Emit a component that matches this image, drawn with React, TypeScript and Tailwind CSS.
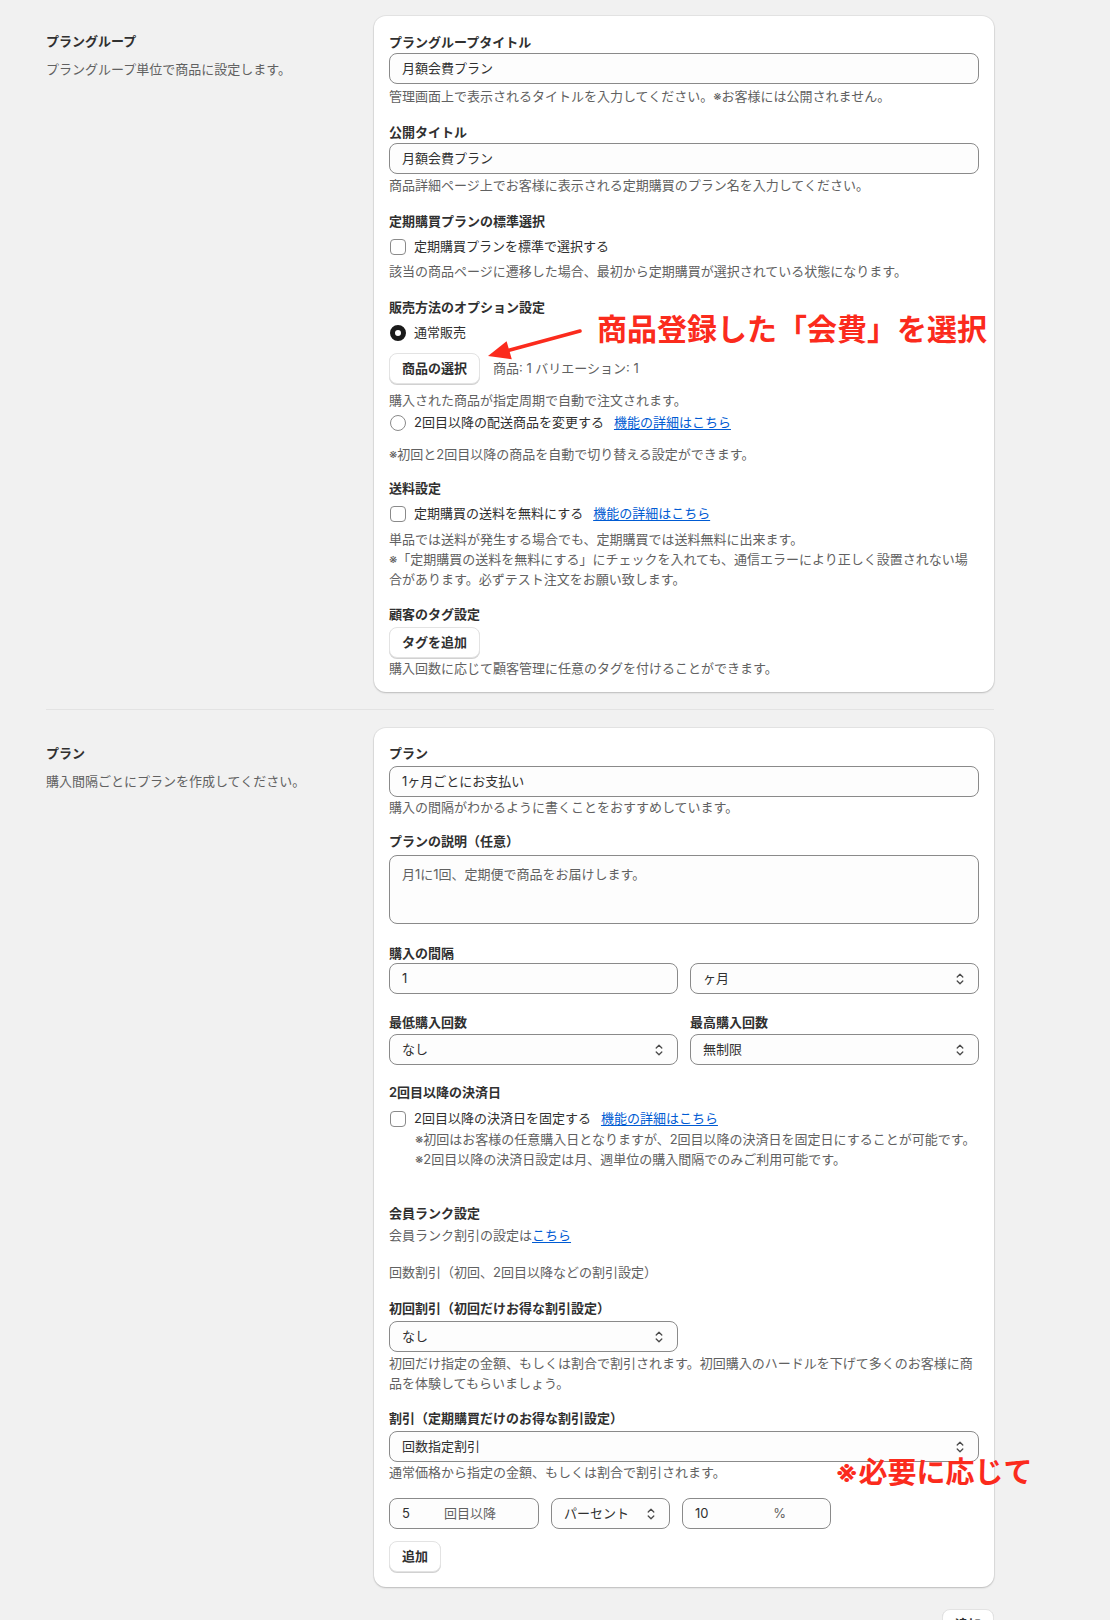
import type { ReactNode } from "react";

const Label = ({ children, className = "" }: { children: ReactNode; className?: string }) => (
  <div className={`text-[13px] leading-5 font-semibold text-[#303030] ${className}`}>{children}</div>
);

const Help = ({ children, className = "" }: { children: ReactNode; className?: string }) => (
  <div className={`text-[13px] leading-5 text-[#616161] ${className}`}>{children}</div>
);

const Field = ({ children, className = "" }: { children: ReactNode; className?: string }) => (
  <div
    className={`flex h-[31px] items-center rounded-lg border border-[#8a8a8a] bg-[#fdfdfd] px-3 text-[13px] text-[#303030] ${className}`}
  >
    {children}
  </div>
);

const Chevrons = () => (
  <svg viewBox="0 0 20 20" className="h-4 w-4 shrink-0" fill="none" stroke="#4a4a4a" strokeWidth="1.6" strokeLinecap="round" strokeLinejoin="round">
    <path d="M6.5 7.5 10 4l3.5 3.5" />
    <path d="M6.5 12.5 10 16l3.5-3.5" />
  </svg>
);

const Select = ({ value, className = "" }: { value: string; className?: string }) => (
  <Field className={`justify-between pr-[10px] ${className}`}>
    <span>{value}</span>
    <Chevrons />
  </Field>
);

const Button = ({ children, className = "" }: { children: ReactNode; className?: string }) => (
  <button
    className={`h-[31px] rounded-lg border border-[#e3e3e3] bg-white px-3 text-[13px] font-semibold text-[#303030] shadow-[0_1px_0_rgba(0,0,0,0.18)] ${className}`}
  >
    {children}
  </button>
);

const Checkbox = () => (
  <span className="ml-px h-4 w-4 shrink-0 rounded-[4px] border border-[#8a8a8a] bg-white" />
);

const Link = ({ children }: { children: ReactNode }) => (
  <a className="text-[#005bd3] underline underline-offset-2">{children}</a>
);

const CheckRow = ({ label, link, className = "" }: { label: string; link?: string; className?: string }) => (
  <div className={`flex h-5 items-center text-[13px] text-[#303030] ${className}`}>
    <Checkbox />
    <span className="ml-[8px]">{label}</span>
    {link && (
      <span className="ml-[10px]">
        <Link>{link}</Link>
      </span>
    )}
  </div>
);

const Card = ({ children }: { children: ReactNode }) => (
  <div className="w-[620px] rounded-xl bg-white px-[15px] shadow-[0_0_0_1px_rgba(0,0,0,0.05),0_1px_2px_rgba(0,0,0,0.18)]">
    {children}
  </div>
);

const SectionInfo = ({ title, desc }: { title: string; desc: string }) => (
  <div className="w-[328px] pt-[15px]">
    <div className="text-[13px] leading-5 font-semibold text-[#303030]">{title}</div>
    <div className="mt-2 text-[13px] leading-5 text-[#616161]">{desc}</div>
  </div>
);

export default function App() {
  return (
    <div className="relative min-h-[1620px] bg-[#f1f1f1] pt-4 font-['Inter','Noto_Sans_CJK_JP',sans-serif]">
      <div className="ml-[46px] w-[948px]">
        {/* plan group */}
        <div className="flex">
          <SectionInfo title="プラングループ" desc="プラングループ単位で商品に設定します。" />
          <Card>
            <div className="pt-4 pb-[14px]">
              <Label>プラングループタイトル</Label>
              <Field className="mt-px">月額会費プラン</Field>
              <Help className="mt-[2px]">管理画面上で表示されるタイトルを入力してください。※お客様には公開されません。</Help>

              <Label className="mt-4">公開タイトル</Label>
              <Field className="mt-px">月額会費プラン</Field>
              <Help className="mt-px">商品詳細ページ上でお客様に表示される定期購買のプラン名を入力してください。</Help>

              <Label className="mt-4">定期購買プランの標準選択</Label>
              <CheckRow className="mt-[6px]" label="定期購買プランを標準で選択する" />
              <Help className="mt-1">該当の商品ページに遷移した場合、最初から定期購買が選択されている状態になります。</Help>

              <Label className="mt-4">販売方法のオプション設定</Label>
              <div className="mt-[6px] flex h-5 items-center text-[13px] text-[#303030]">
                <span className="ml-px h-4 w-4 rounded-full border-[5px] border-[#1a1a1a] bg-white" />
                <span className="ml-[8px]">通常販売</span>
              </div>
              <div className="mt-[10px] flex items-center">
                <Button>商品の選択</Button>
                <span className="ml-[13px] text-[13px] text-[#616161]">商品: 1 バリエーション: 1</span>
              </div>
              <Help className="mt-[6px]">購入された商品が指定周期で自動で注文されます。</Help>
              <div className="mt-[3px] flex h-5 items-center text-[13px] text-[#303030]">
                <span className="ml-px h-4 w-4 rounded-full border border-[#8a8a8a] bg-white" />
                <span className="ml-[8px]">2回目以降の配送商品を変更する</span>
                <span className="ml-[10px]">
                  <Link>機能の詳細はこちら</Link>
                </span>
              </div>
              <Help className="mt-[11px]">※初回と2回目以降の商品を自動で切り替える設定ができます。</Help>

              <Label className="mt-[14px]">送料設定</Label>
              <CheckRow className="mt-[6px]" label="定期購買の送料を無料にする" link="機能の詳細はこちら" />
              <Help className="mt-[5px]">
                単品では送料が発生する場合でも、定期購買では送料無料に出来ます。
                <br />
                ※「定期購買の送料を無料にする」にチェックを入れても、通信エラーにより正しく設置されない場合があります。必ずテスト注文をお願い致します。
              </Help>

              <Label className="mt-[15px]">顧客のタグ設定</Label>
              <Button className="mt-[3px]">タグを追加</Button>
              <Help>購入回数に応じて顧客管理に任意のタグを付けることができます。</Help>
            </div>
          </Card>
        </div>

        <div className="mt-[17px] border-t border-[#e3e3e3]" />

        {/* plan */}
        <div className="mt-[18px] flex">
          <SectionInfo title="プラン" desc="購入間隔ごとにプランを作成してください。" />
          <Card>
            <div className="pt-[15px] pb-[15px]">
              <Label>プラン</Label>
              <Field className="mt-[3px]">1ヶ月ごとにお支払い</Field>
              <Help>購入の間隔がわかるように書くことをおすすめしています。</Help>

              <Label className="mt-[14px]">プランの説明（任意）</Label>
              <div className="mt-1 h-[69px] rounded-lg border border-[#8a8a8a] bg-[#fdfdfd] px-3 py-[8px] text-[13px] leading-5 text-[#616161]">
                月1に1回、定期便で商品をお届けします。
              </div>

              <Label className="mt-[19px]">購入の間隔</Label>
              <div className="grid grid-cols-2 gap-3">
                <Field>1</Field>
                <Select value="ヶ月" />
              </div>

              <div className="mt-[18px] grid grid-cols-2 gap-3">
                <div>
                  <Label>最低購入回数</Label>
                  <Select className="mt-[2px]" value="なし" />
                </div>
                <div>
                  <Label>最高購入回数</Label>
                  <Select className="mt-[2px]" value="無制限" />
                </div>
              </div>

              <Label className="mt-[17px]">2回目以降の決済日</Label>
              <CheckRow className="mt-[7px]" label="2回目以降の決済日を固定する" link="機能の詳細はこちら" />
              <Help className="pl-[26px] whitespace-nowrap">
                ※初回はお客様の任意購入日となりますが、2回目以降の決済日を固定日にすることが可能です。
                <br />
                ※2回目以降の決済日設定は月、週単位の購入間隔でのみご利用可能です。
              </Help>

              <Label className="mt-[34px]">会員ランク設定</Label>
              <Help className="mt-[2px]">
                会員ランク割引の設定は<Link>こちら</Link>
              </Help>

              <Help className="mt-[17px]">回数割引（初回、2回目以降などの割引設定）</Help>

              <Label className="mt-4">初回割引（初回だけお得な割引設定）</Label>
              <Select className="mt-[3px] w-[289px]" value="なし" />
              <Help className="mt-px">
                初回だけ指定の金額、もしくは割合で割引されます。初回購入のハードルを下げて多くのお客様に商品を体験してもらいましょう。
              </Help>

              <Label className="mt-[15px]">割引（定期購買だけのお得な割引設定）</Label>
              <Select className="mt-[3px]" value="回数指定割引" />
              <Help>通常価格から指定の金額、もしくは割合で割引されます。</Help>

              <div className="mt-4 flex gap-3">
                <Field className="w-[150px] pr-[42px]">
                  <span className="flex-1">5</span>
                  <span className="text-[#616161]">回目以降</span>
                </Field>
                <Select className="w-[119px]" value="パーセント" />
                <Field className="w-[149px] pr-[44px]">
                  <span className="flex-1">10</span>
                  <span className="text-[#616161]">%</span>
                </Field>
              </div>

              <Button className="mt-3">追加</Button>
            </div>
          </Card>
        </div>

        <div className="mt-[22px] flex justify-end">
          <Button>追加</Button>
        </div>
      </div>

      {/* annotations */}
      <div className="absolute left-[597px] top-[310px] whitespace-nowrap text-[30px] leading-[38px] font-bold text-[#fb2b1d]">
        商品登録した「会費」を選択
      </div>
      <svg className="absolute left-[480px] top-[320px]" width="110" height="45" viewBox="0 0 110 45">
        <line x1="100" y1="11" x2="29" y2="30.2" stroke="#fb2b1d" strokeWidth="3.5" strokeLinecap="round" />
        <polygon points="8,36 31.8,39.2 26.6,21.2" fill="#fb2b1d" />
      </svg>
      <div className="absolute left-[835px] top-[1454px] whitespace-nowrap text-[29px] leading-[38px] font-bold text-[#fb2b1d]">
        ※必要に応じて
      </div>
    </div>
  );
}
